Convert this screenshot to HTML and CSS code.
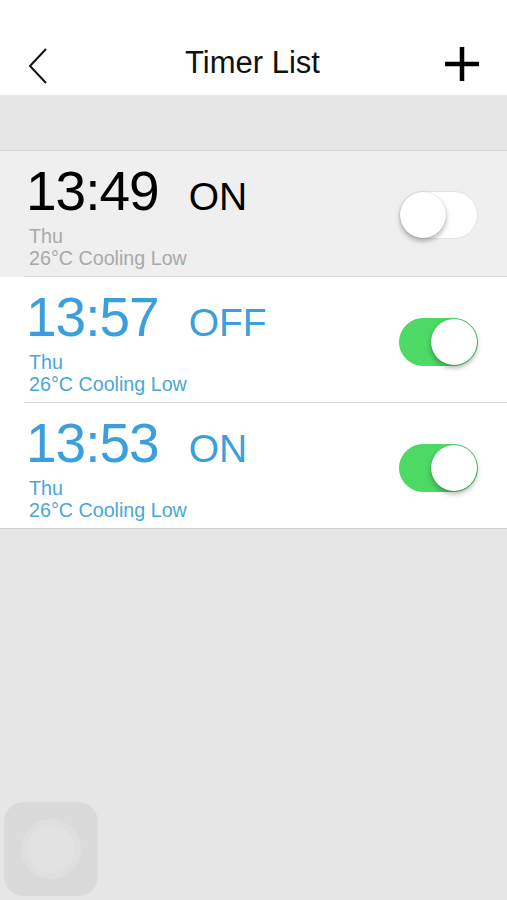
FILE: index.html
```html
<!DOCTYPE html>
<html lang="en">
<head>
  <meta charset="UTF-8">
  <meta name="viewport" content="width=device-width, initial-scale=1.0">
  <title>Timer List</title>
  <link rel="stylesheet" href="styles.css">
</head>
<body>
  <!-- Top navigation bar -->
  <div class="nav">
    <a class="nav-back" href="#">
      <svg width="20" height="36" viewBox="0 0 20 36"><path d="M18 1 L2 18 L18 35" fill="none" stroke="#111" stroke-width="2"/></svg>
    </a>
    <div class="nav-title">Timer List</div>
    <a class="nav-add" href="#">
      <svg width="34" height="34" viewBox="0 0 34 34"><path d="M17 0 V34 M0 17 H34" fill="none" stroke="#000" stroke-width="4.5"/></svg>
    </a>
  </div>

  <div class="spacer"></div>

  <!-- Timers -->
  <div class="list">
    <div class="timer timer-off selected">
      <div class="timer-info">
        <div class="timer-head"><span class="time">13:49</span><span class="action">ON</span></div>
        <div class="detail">Thu</div>
        <div class="detail">26°C Cooling Low</div>
      </div>
      <div class="switch"><div class="knob"></div></div>
    </div>
    <div class="timer timer-on">
      <div class="timer-info">
        <div class="timer-head"><span class="time">13:57</span><span class="action">OFF</span></div>
        <div class="detail">Thu</div>
        <div class="detail">26°C Cooling Low</div>
      </div>
      <div class="switch on"><div class="knob"></div></div>
    </div>
    <div class="timer timer-on last">
      <div class="timer-info">
        <div class="timer-head"><span class="time">13:53</span><span class="action">ON</span></div>
        <div class="detail">Thu</div>
        <div class="detail">26°C Cooling Low</div>
      </div>
      <div class="switch on"><div class="knob"></div></div>
    </div>
  </div>

  <!-- Assistive touch button -->
  <div class="assist"><div class="assist-dot"></div></div>
</body>
</html>
```

FILE: styles.css
```css
body {
  margin: 0;
  height: 900px;
  background: #e6e6e6;
  font-family: "Liberation Sans", Arial, sans-serif;
  overflow: hidden;
  position: relative;
}
.nav {
  height: 95px;
  background: #fff;
  display: flex;
  align-items: flex-end;
  justify-content: space-between;
  padding: 0 28px 12px 28px;
  box-sizing: border-box;
}
.nav-back {
  display: flex;
  margin-bottom: -1px;
}
.nav-title {
  font-size: 31px;
  color: #111;
  padding-bottom: 2px;
  margin-left: 12px;
}
.nav-add {
  display: flex;
  margin-bottom: 2px;
}
.spacer {
  height: 55px;
  border-bottom: 1px solid #d6d6d6;
}
.list {
  background: #fff;
  border-bottom: 1px solid #d2d2d2;
}
.timer {
  height: 126px;
  display: flex;
  align-items: center;
  justify-content: space-between;
  padding: 0 29px 0 26px;
  box-sizing: border-box;
  position: relative;
}
.timer::after {
  content: "";
  position: absolute;
  left: 24px;
  right: 0;
  bottom: 0;
  height: 1px;
  background: #d8d8d8;
}
.timer.last {
  height: 125px;
}
.timer.last::after {
  display: none;
}
.timer.selected {
  background: #efefef;
}
.timer-info {
  padding-top: 9px;
}
.timer-head {
  display: flex;
  align-items: baseline;
  height: 62px;
  margin-top: -9px;
  margin-bottom: 4px;
}
.time {
  font-size: 55px;
  letter-spacing: -1px;
}
.action {
  font-size: 39px;
  margin-left: 30px;
}
.detail {
  font-size: 19.7px;
  line-height: 22px;
  margin-left: 3px;
}
.timer-off .time,
.timer-off .action {
  color: #000;
}
.timer-off .detail {
  color: #a9a9a9;
}
.timer-on .time,
.timer-on .action {
  color: #3a9fdc;
}
.timer-on .detail {
  color: #48a7d8;
}
.switch {
  width: 79px;
  height: 48px;
  border-radius: 24px;
  background: #fff;
  border: 1px solid #e4e4e4;
  box-sizing: border-box;
  position: relative;
  margin-top: 2px;
}
.knob {
  position: absolute;
  top: 0;
  left: 0;
  width: 46px;
  height: 46px;
  border-radius: 50%;
  background: #fff;
  box-shadow: 0 3px 5px rgba(0, 0, 0, 0.3), 0 0 1px rgba(0, 0, 0, 0.2);
}
.switch.on {
  background: #4cd964;
  border-color: #4cd964;
  margin-top: 4px;
}
.switch.on .knob {
  left: auto;
  right: 0;
}
.assist {
  position: absolute;
  left: 4px;
  top: 802px;
  width: 94px;
  height: 94px;
  border-radius: 20px;
  background: #dadada;
  display: flex;
  align-items: center;
  justify-content: center;
}
.assist-dot {
  width: 48px;
  height: 48px;
  border-radius: 50%;
  background: #e2e2e2;
  box-shadow: 0 0 0 6px #dfdfdf;
}
```
